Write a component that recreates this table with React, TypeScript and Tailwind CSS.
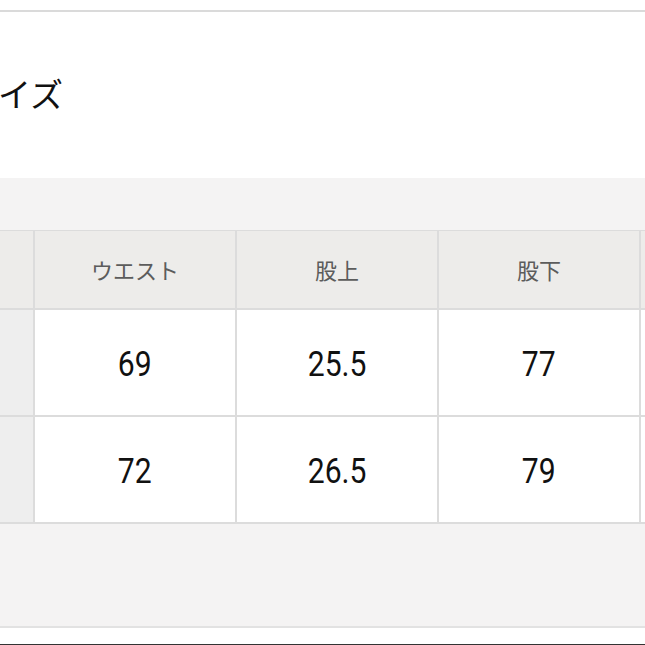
import React from "react";

const headers = ["", "ウエスト", "股上", "股下", ""];
const rows = [
  ["", "69", "25.5", "77", ""],
  ["", "72", "26.5", "79", ""],
];

export default function App() {
  return (
    <div className="w-[645px] h-[645px] bg-white overflow-hidden flex flex-col">
      <div className="h-[10px] bg-white shrink-0" />
      <div className="h-[2px] bg-[#dadada] shrink-0" />
      <div className="h-[166px] shrink-0 flex items-center pb-[4px]">
        <h2
          className="ml-[-35px] text-[33px] leading-none text-[#111] font-normal whitespace-nowrap"
          style={{ fontFamily: '"Noto Sans CJK JP", "Noto Sans", sans-serif' }}
        >
          サイズ
        </h2>
      </div>
      <div className="h-[448px] shrink-0 bg-[#f4f3f3] pt-[52px] overflow-hidden">
        <div className="ml-[-167px] w-[1010px] grid grid-cols-[200px_200px_200px_200px_200px] grid-rows-[77px_105px_105px] gap-[2px] bg-[#dcdcdc] pt-[1px] pb-[2px]">
          {headers.map((h, i) => (
            <div
              key={"h" + i}
              className="bg-[#edecea] flex items-center justify-center text-[22px] text-[#5c5c5c]"
              style={{ fontFamily: '"Noto Sans CJK JP", "Noto Sans", sans-serif' }}
            >
              {h}
            </div>
          ))}
          {rows.map((r, ri) =>
            r.map((c, ci) => (
              <div
                key={ri + "-" + ci}
                className={
                  (ci === 0 ? "bg-[#eeeeee]" : "bg-white") +
                  " flex items-center justify-center"
                }
              >
                <span
                  className="inline-block text-[35px] leading-none text-[#111] scale-x-[0.86] pt-[3px]"
                  style={{ fontFamily: 'Roboto, "Liberation Sans", sans-serif' }}
                >
                  {c}
                </span>
              </div>
            ))
          )}
        </div>
      </div>
      <div className="h-[2px] bg-[#e2e2e2] shrink-0" />
      <div className="h-[16px] bg-white shrink-0" />
      <div className="h-[1px] bg-[#333333] shrink-0" />
    </div>
  );
}
